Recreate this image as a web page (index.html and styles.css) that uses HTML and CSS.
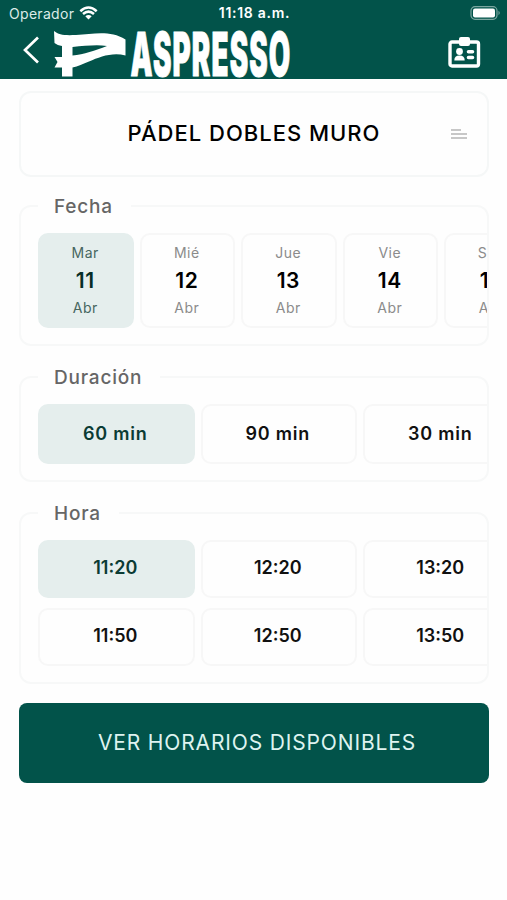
FILE: index.html
```html
<!DOCTYPE html>
<html lang="es">
<head>
    <meta charset="UTF-8">
    <meta name="viewport" content="width=device-width, initial-scale=1.0">
    <title>Aspresso</title>
    <link rel="stylesheet" href="styles.css">
</head>
<body>
    <header class="header">
        <div class="status">
            <div class="carrier">
                <span>Operador</span>
                <svg width="19" height="14" viewBox="0 0 19 14">
                    <path d="M1.3 5.2 Q9.5 -2.2 17.7 5.2 M4 8 Q9.5 3.2 15 8" fill="none" stroke="#fff" stroke-width="2.5"/>
                    <path d="M6.3 10.3 Q9.5 7.8 12.7 10.3 L9.5 13.6Z" fill="#fff"/>
                </svg>
            </div>
            <span class="clock">11:18 a.m.</span>
            <svg class="battery" width="31" height="14" viewBox="0 0 31 14">
                <rect x="1" y=".7" width="26" height="12.6" rx="4" fill="none" stroke="#7ba6a0" stroke-width="1.2"/>
                <rect x="3" y="2.6" width="22" height="8.8" rx="2" fill="#fff"/>
                <path d="M28.5 4.8 Q31 7 28.5 9.2Z" fill="#7ba6a0"/>
            </svg>
        </div>
        <div class="nav">
            <svg class="back" width="18" height="30" viewBox="0 0 18 30">
                <path d="M16 2.5 L3 15 L16 27.5" fill="none" stroke="#fff" stroke-width="2.7"/>
            </svg>
            <svg class="logo" width="240" height="50" viewBox="0 0 240 50">
                <path d="M0 1 C5 5 10 5.5 22 5 C40 4 56 0 71.5 9.5 L71.5 25.5 C58 22 46 27 35 31.5 C29 34 24 36.5 18.5 37.500 L18.5 46.5 L8 46.5 L8 37.5 L0.5 37.5 L3.5 32 L0.5 27 L8 27 L8 16 C5 15.500 2.500 14.500 0.500 13Z M18.500 17 L18.500 25.500 C30 24.500 41 20.500 53 16 C42 14.500 31 16 18.500 17Z" fill="#fff" fill-rule="evenodd"/>
                <text class="brand" transform="translate(76.5 46.2) scale(.5 1)" textLength="322" lengthAdjust="spacingAndGlyphs">ASPRESSO</text>
            </svg>
            <svg class="card-icon" width="34" height="32" viewBox="0 0 34 32">
                <rect x="2" y="5" width="28.500" height="24" rx="2" fill="none" stroke="#fff" stroke-width="3.400"/>
                <rect x="11" y="0" width="11" height="9" rx="2" fill="#fff"/>
                <circle cx="11.500" cy="14.500" r="3.400" fill="#fff"/>
                <path d="M6.300 23.500 Q6.300 18.500 11.500 18.500 Q16.700 18.500 16.700 23.500Z" fill="#fff"/>
                <path d="M20.500 14.800 H24.500 M20.500 20.500 H24.500" stroke="#fff" stroke-width="3.600" stroke-linecap="round"/>
            </svg>
        </div>
    </header>

    <main class="content">
        <div class="court">
            <span class="court-name">PÁDEL DOBLES MURO</span>
            <svg class="lines" width="18" height="12" viewBox="0 0 18 12">
                <path d="M1 2 H11 M1 6 H17 M1 10 H17" stroke="#b5b5b5" stroke-width="1.3"/>
            </svg>
        </div>

        <fieldset class="group">
            <legend>Fecha</legend>
            <div class="days">
                <div class="day selected"><span>Mar</span><b>11</b><span>Abr</span></div>
                <div class="day"><span>Mié</span><b>12</b><span>Abr</span></div>
                <div class="day"><span>Jue</span><b>13</b><span>Abr</span></div>
                <div class="day"><span>Vie</span><b>14</b><span>Abr</span></div>
                <div class="day"><span>Sáb</span><b>15</b><span>Abr</span></div>
            </div>
        </fieldset>

        <fieldset class="group">
            <legend>Duración</legend>
            <div class="options durations">
                <div class="option selected">60 min</div>
                <div class="option">90 min</div>
                <div class="option">30 min</div>
            </div>
        </fieldset>

        <fieldset class="group">
            <legend>Hora</legend>
            <div class="options hours">
                <div class="option selected">11:20</div>
                <div class="option">12:20</div>
                <div class="option">13:20</div>
                <div class="option">11:50</div>
                <div class="option">12:50</div>
                <div class="option">13:50</div>
            </div>
        </fieldset>

        <button type="button" class="submit">VER HORARIOS DISPONIBLES</button>
    </main>
</body>
</html>
```

FILE: styles.css
```css
*{box-sizing: border-box;}
body{
    margin: 0;
    background: #fefefe;
    font-family: "Inter", sans-serif;
    color: #111;
}
.header{height: 79px; background: #02534a; color: #fff;}
.status{
    display: grid;
    grid-template-columns: 1fr auto 1fr;
    align-items: center;
    height: 26px;
    padding: 0 6px 0 9px;
    font-size: 14px;
}
.carrier{display: flex; align-items: center; gap: 5px; color: #dcebe8; letter-spacing: 0.3px;}
.clock{font-weight: 600; font-size: 14px; letter-spacing: 0.7px; line-height: 14px; margin-right: 1px;}
.battery{justify-self: end;}
.nav{display: flex; align-items: flex-start; height: 53px; padding: 4px 25px 0 22px;}
.back{margin-top: 5px;}
.logo{margin-left: 14px; overflow: visible;}
.brand{
    font-size: 60px;
    font-weight: 900;
    letter-spacing: 2.5px;
    fill: #fff;
    stroke: #fff;
    stroke-width: 1;
}
.card-icon{margin: 7px 0 0 auto;}

.content{padding: 12px 18px 0 19px;}
.court{
    display: grid;
    grid-template-columns: 1fr auto 1fr;
    align-items: center;
    height: 86px;
    padding: 0 19px;
    border: 2px solid #f5f7f7;
    border-radius: 12px;
}
.court-name{
    grid-column: 2;
    margin-top: -2px;
    font-size: 22px;
    font-weight: 550;
    letter-spacing: 1px;
    color: #000;
}
.lines{justify-self: end;}

.group{
    min-width: 0;
    margin: 16px 0 0;
    padding: 14px 0 16px 17px;
    border: 2px solid #f7f8f8;
    border-radius: 12px;
}
.group + .group{margin-top: 18px;}
legend{
    height: 26px;
    padding: 0 18px 0 16px;
    line-height: 28px;
    font-size: 19px;
    font-weight: 550;
    letter-spacing: 0.8px;
    color: #666;
}
.days{display: flex; gap: 6px; overflow: hidden;}
.day{
    display: flex;
    flex-direction: column;
    align-items: center;
    justify-content: center;
    flex: 0 0 95.5px;
    height: 95px;
    padding: 0 1px 1px 0;
    border: 2px solid #f7f7f7;
    border-radius: 10px;
    font-size: 14px;
    letter-spacing: 0.5px;
    color: #8b8b8b;
}
.day span{line-height: 20px;}
.day b{line-height: 35px; font-size: 21px; font-weight: 600; color: #000;}
.options{display: grid; grid-template-columns: repeat(3, 156.5px); gap: 10px 6px; overflow: hidden;}
.option{
    display: flex;
    align-items: center;
    justify-content: center;
    height: 58px;
    padding: 0 2px 3px 0;
    border: 2px solid #f7f7f7;
    border-radius: 10px;
    font-size: 18px;
    font-weight: 600;
}
.durations .option{height: 60px; padding-bottom: 2px; letter-spacing: 0.8px;}
.day.selected, .option.selected{background: #e5eeed; border-color: #e5eeed; color: #0b3b34;}
.day.selected span{color: #47665f;}
.day.selected b{color: #062d27;}
.submit{
    display: block;
    width: 100%;
    height: 80px;
    margin-top: 19px;
    padding: 0 0 2px 6px;
    border: 0;
    border-radius: 8px;
    background: #02534a;
    color: #dff3f0;
    font-family: inherit;
    font-size: 21px;
    letter-spacing: 0.85px;
}
```
